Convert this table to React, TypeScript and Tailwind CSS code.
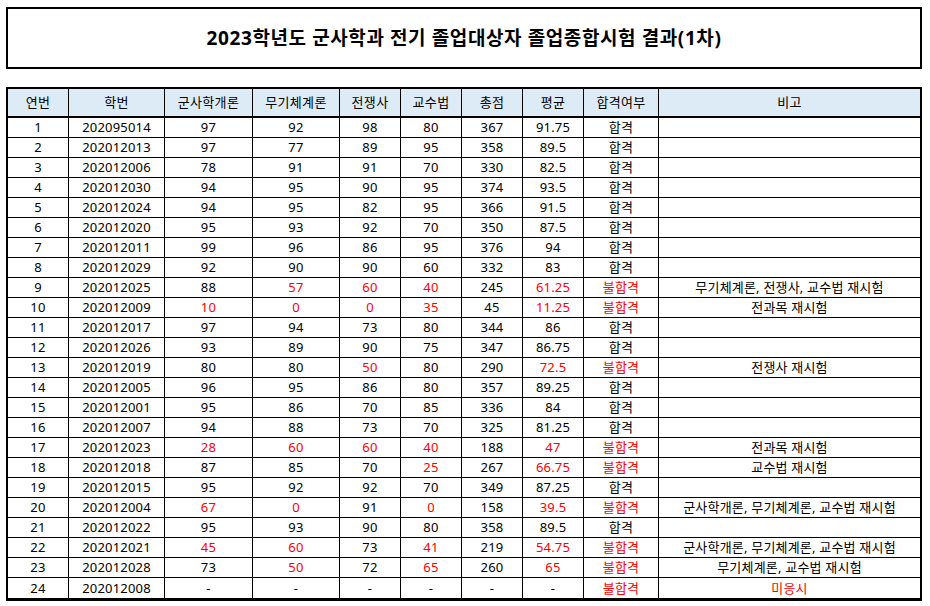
const HEADERS = ["연번", "학번", "군사학개론", "무기체계론", "전쟁사", "교수법", "총점", "평균", "합격여부", "비고"];

// r = columns shown in red (index into the row)
type Row = { v: string[]; r: number[] };

const ROWS: Row[] = [
	{ v: ["1", "202095014", "97", "92", "98", "80", "367", "91.75", "합격", ""], r: [] },
	{ v: ["2", "202012013", "97", "77", "89", "95", "358", "89.5", "합격", ""], r: [] },
	{ v: ["3", "202012006", "78", "91", "91", "70", "330", "82.5", "합격", ""], r: [] },
	{ v: ["4", "202012030", "94", "95", "90", "95", "374", "93.5", "합격", ""], r: [] },
	{ v: ["5", "202012024", "94", "95", "82", "95", "366", "91.5", "합격", ""], r: [] },
	{ v: ["6", "202012020", "95", "93", "92", "70", "350", "87.5", "합격", ""], r: [] },
	{ v: ["7", "202012011", "99", "96", "86", "95", "376", "94", "합격", ""], r: [] },
	{ v: ["8", "202012029", "92", "90", "90", "60", "332", "83", "합격", ""], r: [] },
	{ v: ["9", "202012025", "88", "57", "60", "40", "245", "61.25", "불합격", "무기체계론, 전쟁사, 교수법 재시험"], r: [3, 4, 5, 7, 8] },
	{ v: ["10", "202012009", "10", "0", "0", "35", "45", "11.25", "불합격", "전과목 재시험"], r: [2, 3, 4, 5, 7, 8] },
	{ v: ["11", "202012017", "97", "94", "73", "80", "344", "86", "합격", ""], r: [] },
	{ v: ["12", "202012026", "93", "89", "90", "75", "347", "86.75", "합격", ""], r: [] },
	{ v: ["13", "202012019", "80", "80", "50", "80", "290", "72.5", "불합격", "전쟁사 재시험"], r: [4, 7, 8] },
	{ v: ["14", "202012005", "96", "95", "86", "80", "357", "89.25", "합격", ""], r: [] },
	{ v: ["15", "202012001", "95", "86", "70", "85", "336", "84", "합격", ""], r: [] },
	{ v: ["16", "202012007", "94", "88", "73", "70", "325", "81.25", "합격", ""], r: [] },
	{ v: ["17", "202012023", "28", "60", "60", "40", "188", "47", "불합격", "전과목 재시험"], r: [2, 3, 4, 5, 7, 8] },
	{ v: ["18", "202012018", "87", "85", "70", "25", "267", "66.75", "불합격", "교수법 재시험"], r: [5, 7, 8] },
	{ v: ["19", "202012015", "95", "92", "92", "70", "349", "87.25", "합격", ""], r: [] },
	{ v: ["20", "202012004", "67", "0", "91", "0", "158", "39.5", "불합격", "군사학개론, 무기체계론, 교수법 재시험"], r: [2, 3, 5, 7, 8] },
	{ v: ["21", "202012022", "95", "93", "90", "80", "358", "89.5", "합격", ""], r: [] },
	{ v: ["22", "202012021", "45", "60", "73", "41", "219", "54.75", "불합격", "군사학개론, 무기체계론, 교수법 재시험"], r: [2, 3, 5, 7, 8] },
	{ v: ["23", "202012028", "73", "50", "72", "65", "260", "65", "불합격", "무기체계론, 교수법 재시험"], r: [3, 5, 7, 8] },
	{ v: ["24", "202012008", "-", "-", "-", "-", "-", "-", "불합격", "미응시"], r: [8, 9] },
];

const COLS = "grid grid-cols-[61px_96px_88px_87px_61px_61px_61px_61px_75px_1fr]";

export default function App() {
	return (
		<div className="w-[930px] h-[606px] bg-white pl-[6px] pr-[8px] pt-[7px] font-['Noto_Sans','Noto_Sans_CJK_KR',sans-serif] text-black">
			<div className="h-[62px] border-2 border-black flex items-center justify-center">
				<h1 className="text-[19px] font-bold tracking-[0.6px]">
					2023학년도 군사학과 전기 졸업대상자 졸업종합시험 결과(1차)
				</h1>
			</div>

			<div className="mt-[18px] border-2 border-b-[3px] border-black">
				<div className={`${COLS} h-[29px] border-b-2 border-black bg-[#ddebf7] text-[13px] tracking-[0.3px]`}>
					{HEADERS.map((h, i) => (
						<div
							key={h}
							className={`flex items-center justify-center ${i < HEADERS.length - 1 ? "border-r border-black" : ""}`}
						>
							{h}
						</div>
					))}
				</div>
				{ROWS.map((row, ri) => (
					<div
						key={row.v[0]}
						className={`${COLS} h-5 text-[13px] leading-none tracking-[0.2px] ${ri < ROWS.length - 1 ? "border-b border-black" : ""}`}
					>
						{row.v.map((cell, ci) => (
							<div
								key={ci}
								className={`flex items-center justify-center ${ci < row.v.length - 1 ? "border-r border-black" : ""} ${row.r.includes(ci) ? "text-[#ff0000]" : ""}`}
							>
								{cell}
							</div>
						))}
					</div>
				))}
			</div>
		</div>
	);
}
